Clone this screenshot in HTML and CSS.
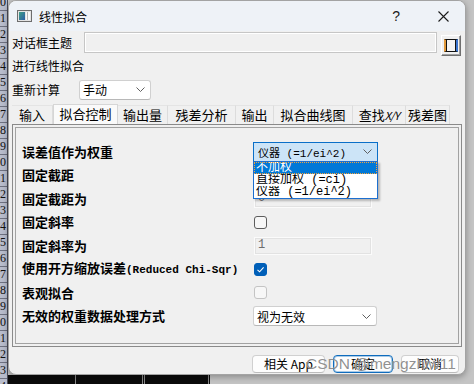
FILE: index.html
```html
<!DOCTYPE html>
<html lang="zh-CN">
<head>
    <meta charset="UTF-8">
    <title>线性拟合</title>
    <link rel="stylesheet" href="styles.css">
</head>
<body>
    <div class="screen">
        <!-- Worksheet row headers behind the dialog -->
        <div class="rowheads">
            <div class="rh">10</div><div class="rh">11</div><div class="rh">12</div><div class="rh">13</div>
            <div class="rh">14</div><div class="rh">15</div><div class="rh">16</div><div class="rh">17</div>
            <div class="rh">18</div><div class="rh">19</div><div class="rh">20</div><div class="rh">21</div>
            <div class="rh">22</div><div class="rh">23</div><div class="rh">24</div><div class="rh">25</div>
            <div class="rh">26</div><div class="rh">27</div><div class="rh">28</div><div class="rh">29</div>
            <div class="rh">30</div><div class="rh">31</div><div class="rh">32</div><div class="rh">33</div>
            <div class="rh">34</div>
        </div>

        <div class="workspace">
            <div class="dialog">
                <div class="titlebar">
                    <svg class="app-icon" width="15" height="12" viewBox="0 0 15 12">
                        <defs>
                            <linearGradient id="ig" x1="0" y1="0" x2="1" y2="1">
                                <stop offset="0" stop-color="#3f9f86"/>
                                <stop offset="1" stop-color="#2d5fa8"/>
                            </linearGradient>
                        </defs>
                        <rect x="0.5" y="0.5" width="14" height="11" fill="#e4e4e4" stroke="#6d6d6d"/>
                        <rect x="2" y="2" width="6" height="8" fill="url(#ig)"/>
                        <rect x="9" y="2" width="4" height="8" fill="#fafafa"/>
                        <line x1="10.5" y1="2" x2="10.5" y2="10" stroke="#b5b5b5"/>
                    </svg>
                    <span class="title">线性拟合</span>
                    <span class="help">?</span>
                    <svg class="close" width="11" height="11" viewBox="0 0 11 11">
                        <path d="M0.5 0.5 L10.5 10.5 M10.5 0.5 L0.5 10.5" stroke="#1b1b1b" stroke-width="1.1"/>
                    </svg>
                </div>

                <div class="body">
                    <div class="row theme-row">
                        <span class="lbl-theme">对话框主题</span>
                        <div class="theme-input"></div>
                        <button class="theme-btn"><span class="theme-ico"></span></button>
                    </div>
                    <div class="row note-row">进行线性拟合</div>
                    <div class="row recalc-row">
                        <span class="lbl-recalc">重新计算</span>
                        <div class="combo combo-small">
                            <span>手动</span>
                            <svg class="chev" width="9" height="5" viewBox="0 0 9 5"><polyline points="0.5,0.5 4.5,4.5 8.5,0.5" fill="none" stroke="#5f5f5f"/></svg>
                        </div>
                    </div>

                    <div class="tabs">
                        <div class="tab">输入</div>
                        <div class="tab active">拟合控制</div>
                        <div class="tab">输出量</div>
                        <div class="tab">残差分析</div>
                        <div class="tab">输出</div>
                        <div class="tab">拟合曲线图</div>
                        <div class="tab">查找<span class="xy">X/Y</span></div>
                        <div class="tab">残差图</div>
                    </div>

                    <div class="panel">
                        <div class="panel-inner">
                            <div class="fields">
                                <div class="flabel">误差值作为权重</div>
                                <div class="ctl">
                                    <div class="combo combo-open">
                                        <span class="mono">仪器 (=1/ei^2)</span>
                                        <svg class="chev" width="9" height="5" viewBox="0 0 9 5"><polyline points="0.5,0.5 4.5,4.5 8.5,0.5" fill="none" stroke="#5f5f5f"/></svg>
                                        <div class="droplist">
                                            <div class="opt selected">不加权</div>
                                            <div class="opt">直接加权 (=ci)</div>
                                            <div class="opt">仪器 (=1/ei^2)</div>
                                        </div>
                                    </div>
                                </div>

                                <div class="flabel">固定截距</div>
                                <div class="ctl"><span class="check"></span></div>

                                <div class="flabel">固定截距为</div>
                                <div class="ctl"><div class="textbox">0</div></div>

                                <div class="flabel">固定斜率</div>
                                <div class="ctl"><span class="check"></span></div>

                                <div class="flabel">固定斜率为</div>
                                <div class="ctl"><div class="textbox">1</div></div>

                                <div class="flabel">使用开方缩放误差<span class="ascii">(Reduced Chi-Sqr)</span></div>
                                <div class="ctl">
                                    <span class="check checked">
                                        <svg width="11" height="11" viewBox="0 0 11 11"><polyline points="2.5,5.8 4.6,7.8 8.6,3.4" fill="none" stroke="#fff" stroke-width="1.1"/></svg>
                                    </span>
                                </div>

                                <div class="flabel">表观拟合</div>
                                <div class="ctl"><span class="check disabled"></span></div>

                                <div class="flabel">无效的权重数据处理方式</div>
                                <div class="ctl">
                                    <div class="combo combo-wide">
                                        <span>视为无效</span>
                                        <svg class="chev" width="9" height="5" viewBox="0 0 9 5"><polyline points="0.5,0.5 4.5,4.5 8.5,0.5" fill="none" stroke="#5f5f5f"/></svg>
                                    </div>
                                </div>
                            </div>
                        </div>
                    </div>

                    <div class="footer">
                        <button class="btn btn-app">相关 App</button>
                        <button class="btn btn-ok">确定</button>
                        <button class="btn">取消</button>
                    </div>
                </div>

                <div class="watermark">CSDN @mengzhiw11</div>
            </div>

            <div class="strip">
                <div class="strip-cell c1"></div>
                <div class="strip-cell c2"></div>
                <div class="strip-cell c3"></div>
                <div class="strip-cell c4"></div>
            </div>
        </div>
    </div>
</body>
</html>
```

FILE: styles.css
```css
* {
    margin: 0;
    padding: 0;
    box-sizing: border-box;
}

body {
    width: 474px;
    height: 384px;
    overflow: hidden;
    background: #c4c4c4;
    font-family: "Noto Sans CJK SC", sans-serif;
    font-size: 12px;
    color: #000;
}

button {
    font: inherit;
    color: inherit;
}

.screen {
    display: flex;
    height: 384px;
}

/* Worksheet row headers */
.rowheads {
    width: 8px;
    flex: none;
    background: #b9bdcc;
    border-right: 1px solid #4b4c58;
    overflow: hidden;
}

.rh {
    height: 16px;
    display: flex;
    justify-content: flex-end;
    align-items: center;
    padding-right: 1px;
    border-bottom: 1px solid #6e7180;
    font: 12px "Liberation Serif", serif;
    color: #111;
    overflow: hidden;
}

.rh:first-child {
    margin-top: -5px;
}

.workspace {
    flex: 1;
    display: flex;
    flex-direction: column;
    background: #c4c4c4;
}

/* Dialog window */
.dialog {
    position: relative;
    width: 458px;
    height: 375px;
    flex: none;
    display: flex;
    flex-direction: column;
    background: #f0f0f0;
    border: 1px solid #a3a3a3;
    border-radius: 8px;
    overflow: hidden;
    box-shadow: 0 2px 6px rgba(0, 0, 0, 0.3);
}

.titlebar {
    height: 30px;
    flex: none;
    display: flex;
    align-items: center;
    padding: 0 16px 0 8px;
    background: #eef2f7;
}

.app-icon {
    margin-right: 7px;
}

.title {
    flex: 1;
    font-size: 12px;
}

.help {
    margin-right: 38px;
    font: 14px "Liberation Sans", sans-serif;
    color: #1b1b1b;
}

.body {
    flex: 1;
    display: flex;
    flex-direction: column;
    padding: 0 3px;
}

.row {
    display: flex;
}

.theme-row {
    margin-top: 1px;
    height: 24px;
    align-items: flex-start;
}

.lbl-theme {
    width: 72px;
    line-height: 21px;
}

.theme-input {
    flex: 1;
    height: 21px;
    background: #f0f0f0;
    border: 1px solid #c6c6c6;
    box-shadow: inset 1px 1px 0 #fff, inset -1px -1px 0 #fff;
}

.theme-btn {
    width: 20px;
    height: 21px;
    margin: 3px 1px 0 4px;
    display: flex;
    align-items: center;
    justify-content: center;
    background: #f0f0f0;
    border: 1px solid;
    border-color: #fff #6f6f6f #6f6f6f #fff;
    box-shadow: inset -1px -1px 0 #a0a0a0;
}

.theme-ico {
    width: 14px;
    height: 13px;
    border: 1px solid #111;
    border-left: 2px solid #e29a3c;
    border-right: 2px solid #3a74cf;
    box-shadow: inset 1px 0 0 #111, inset -1px 0 0 #111;
    background: #f4f4f4;
}

.note-row {
    height: 20px;
    line-height: 20px;
}

.recalc-row {
    height: 27px;
    align-items: center;
}

.lbl-recalc {
    width: 67px;
}

/* Combo boxes */
.combo {
    position: relative;
    height: 20px;
    display: flex;
    align-items: center;
    justify-content: space-between;
    padding: 0 5px 0 3px;
    background: #fff;
    border: 1px solid #d0d0d0;
    border-bottom-color: #b8b8b8;
    border-radius: 3px;
}

.combo-small {
    width: 72px;
}

.combo-wide {
    width: 124px;
}

.combo-open {
    width: 125px;
    padding-left: 4px;
    background: #cce4f7;
    border-color: #0a6fc8;
    border-radius: 0;
}

.mono {
    font-family: "Liberation Mono", "Noto Sans CJK SC", monospace;
    font-size: 11px;
}

.droplist {
    position: absolute;
    top: 100%;
    left: -1px;
    width: 125px;
    height: 38px;
    background: #fff;
    border: 1px solid #1c6fd0;
    box-shadow: 2px 2px 2px rgba(0, 0, 0, 0.25);
    z-index: 2;
}

.opt {
    height: 12px;
    line-height: 12px;
    padding-left: 2px;
    font-family: "Liberation Mono", "Noto Sans CJK SC", monospace;
    font-size: 12px;
    white-space: nowrap;
    overflow: hidden;
}

.opt.selected {
    background: #0078d7;
    color: #fff;
    outline: 1px dotted #f2a23c;
    outline-offset: -1px;
}

/* Tabs */
.tabs {
    margin-top: 1px;
    height: 20px;
    display: grid;
    grid-template-columns: 41px 65px 50px 68px 38px 79px 53px 44px;
    align-items: end;
}

.tab {
    height: 19px;
    line-height: 18px;
    text-align: center;
    font-size: 13px;
    white-space: nowrap;
    border-top: 1px solid #e4e4e4;
    border-right: 1px solid #dcdcdc;
}

.tab.active {
    height: 20px;
    background: #fafafa;
    border: 1px solid #d6d6d6;
    border-bottom: none;
}

.xy {
    font-size: 11px;
    letter-spacing: -0.6px;
    font-style: italic;
}

/* Tab page */
.panel {
    height: 223px;
    flex: none;
    padding: 2px;
    border: 1px solid #8a8a8a;
}

.panel-inner {
    height: 100%;
    padding: 12px 0 0 6px;
    border: 1px solid #a2a2a2;
}

.fields {
    display: grid;
    grid-template-columns: 231px 1fr;
    grid-auto-rows: 23.5px;
    align-items: center;
}

.flabel {
    font-weight: 700;
    font-size: 13px;
    line-height: 16px;
    white-space: nowrap;
}

.ascii {
    font-family: "Liberation Mono", monospace;
    font-size: 11px;
}

.ctl {
    display: flex;
    align-items: center;
}

.check {
    width: 13px;
    height: 13px;
    margin-left: 1px;
    display: flex;
    align-items: center;
    justify-content: center;
    background: #f7f7f7;
    border: 1px solid #5d5d5d;
    border-radius: 3px;
}

.check.checked {
    background: #005fb8;
    border-color: #005fb8;
}

.check.disabled {
    border-color: #c4c4c4;
}

.textbox {
    width: 118px;
    height: 18px;
    margin-left: 1px;
    padding-left: 3px;
    line-height: 16px;
    background: #f0f0f0;
    border: 1px solid #fbfbfb;
    outline: 1px solid #e2e2e2;
    outline-offset: -2px;
    font: 12px "Liberation Mono", monospace;
    color: #6d6d6d;
}

/* Bottom buttons */
.footer {
    margin-top: 8px;
    display: flex;
    justify-content: flex-end;
    gap: 8px;
    padding-right: 3px;
}

.btn {
    width: 58px;
    height: 18px;
    background: #fdfdfd;
    border: 1px solid #d0d0d0;
    border-bottom-color: #bcbcbc;
    border-radius: 4px;
    font-size: 12px;
    line-height: 16px;
}

.btn-app {
    width: 73px;
}

.btn-ok {
    width: 60px;
    border-color: #0f6cbd;
    box-shadow: inset 0 0 0 1px rgba(15, 108, 189, 0.35);
}

.watermark {
    position: absolute;
    left: 297px;
    top: 354px;
    font: 15.5px "Liberation Sans", sans-serif;
    line-height: 18px;
    color: rgba(95, 95, 95, 0.7);
    text-shadow: 0 0 1px rgba(255, 255, 255, 0.9);
    white-space: nowrap;
    pointer-events: none;
}

/* Black worksheet strip below the dialog */
.strip {
    width: 202px;
    height: 9px;
    display: flex;
    background: #0b0b0b;
}

.strip-cell {
    border-right: 1px solid #8a8a8a;
}

.c1 { width: 68px; }
.c2 { width: 67px; }
.c3 { width: 2px; }
.c4 { width: 64px; }
```
